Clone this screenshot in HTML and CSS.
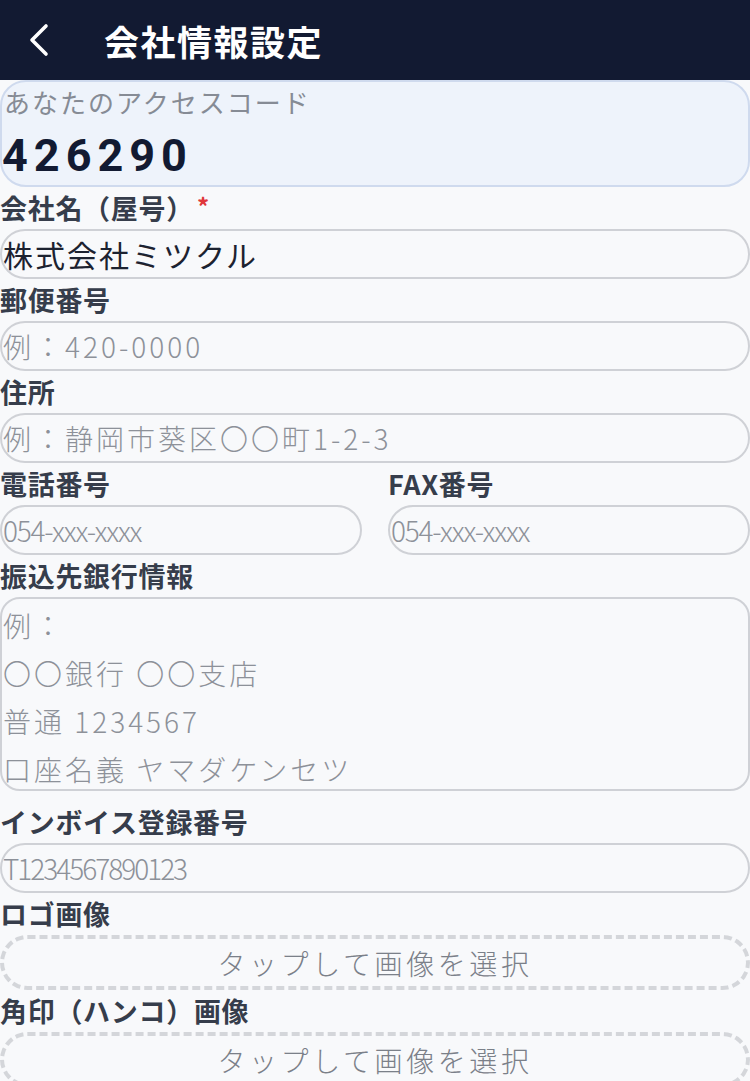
FILE: index.html
```html
<!DOCTYPE html>
<html lang="ja">
  <head>
    <meta charset="UTF-8" />
    <meta name="viewport" content="width=device-width, initial-scale=1.0" />
    <title>会社情報設定</title>
    <link rel="stylesheet" href="styles.css">
  </head>
  <body>
    <header class="appbar">
      <button class="back" aria-label="戻る">
        <svg width="24" height="34" viewBox="0 0 24 34">
          <polyline points="19,3 5,17 19,31" fill="none" stroke="#fff" stroke-width="3.6" stroke-linecap="round" stroke-linejoin="round" />
        </svg>
      </button>
      <h1 class="title">会社情報設定</h1>
    </header>

    <main class="form">
      <div class="code-card">
        <div class="code-label">あなたのアクセスコード</div>
        <div class="code-value">426290</div>
      </div>

      <label class="field-label" for="company">会社名（屋号）<span class="req">*</span></label>
      <input id="company" class="text-input filled" type="text" value="株式会社ミツクル" />

      <label class="field-label" for="zip">郵便番号</label>
      <input id="zip" class="text-input" type="text" placeholder="例：420-0000" />

      <label class="field-label" for="address">住所</label>
      <input id="address" class="text-input" type="text" placeholder="例：静岡市葵区〇〇町1-2-3" />

      <div class="row">
        <div class="col">
          <label class="field-label" for="tel">電話番号</label>
          <input id="tel" class="text-input narrow" type="tel" placeholder="054-xxx-xxxx" />
        </div>
        <div class="col">
          <label class="field-label" for="fax">FAX番号</label>
          <input id="fax" class="text-input narrow" type="tel" placeholder="054-xxx-xxxx" />
        </div>
      </div>

      <label class="field-label" for="bank">振込先銀行情報</label>
      <textarea id="bank" class="text-area" placeholder="例：&#10;〇〇銀行 〇〇支店&#10;普通 1234567&#10;口座名義 ヤマダケンセツ"></textarea>

      <label class="field-label" for="invoice">インボイス登録番号</label>
      <input id="invoice" class="text-input narrow tight" type="text" placeholder="T1234567890123" />

      <div class="field-label">ロゴ画像</div>
      <button class="picker">タップして画像を選択</button>

      <div class="field-label">角印（ハンコ）画像</div>
      <button class="picker">タップして画像を選択</button>
    </main>
  </body>
</html>
```

FILE: styles.css
```css
body {
  margin: 0;
  background: #f8f9fb;
  color: #1c2230;
  font-family: "Noto Sans CJK JP", "Noto Sans", sans-serif;
}

/* Header */
.appbar {
  display: flex;
  align-items: center;
  height: 80px;
  background: #121a32;
}
.back {
  background: none;
  border: 0;
  padding: 0;
  margin: 0 0 0 27px;
  width: 24px;
  height: 34px;
  cursor: pointer;
}
.back svg {
  display: block;
}
.title {
  margin: 0 0 0 53px;
  color: #fff;
  font-size: 35px;
  font-weight: 700;
  letter-spacing: 1.5px;
}

/* Access code */
.code-card {
  background: #eef3fb;
  border: 2px solid #cfdaee;
  border-radius: 26px;
  height: 103px;
}
.code-label {
  color: #868b95;
  font-size: 26px;
  line-height: 40px;
  letter-spacing: 2px;
  padding-left: 2px;
}
.code-value {
  margin-top: 5px;
  color: #121a32;
  font-family: Roboto, "Noto Sans", sans-serif;
  font-weight: 700;
  font-size: 45px;
  line-height: 58px;
  letter-spacing: 6px;
}

/* Fields */
.field-label {
  display: block;
  color: #363d4b;
  font-size: 27px;
  font-weight: 700;
  line-height: 42px;
  letter-spacing: 0.7px;
}
.req {
  color: #e0373a;
  margin-left: 3px;
  font-size: 24px;
  line-height: 1;
  vertical-align: 3px;
}
.text-input,
.text-area {
  display: block;
  box-sizing: border-box;
  width: 100%;
  margin: 0;
  background: transparent;
  border: 2px solid #cfd1d6;
  border-radius: 25px;
  font-family: "Noto Sans CJK JP", "Noto Sans", sans-serif;
  font-size: 28px;
  letter-spacing: 3px;
  color: #1c2230;
  outline: none;
}
.text-input {
  height: 50px;
  padding: 0 1px;
}
.text-input.filled {
  font-size: 30px;
  letter-spacing: 2px;
}
.text-input::placeholder,
.text-area::placeholder {
  color: #8d9199;
  font-weight: 300;
}
.text-input.narrow {
  font-family: "Liberation Sans Narrow", "Noto Sans CJK JP", sans-serif;
  font-size: 28px;
  letter-spacing: -1.2px;
}
.text-input.tight {
  letter-spacing: -2px;
}
.text-area {
  height: 194px;
  padding: 2px 1px;
  border-radius: 20px;
  line-height: 48px;
  resize: none;
  margin-bottom: 10px;
}

.row {
  display: flex;
  gap: 26px;
}
.col {
  flex: 1;
}

/* Image pickers */
.picker {
  display: block;
  box-sizing: border-box;
  width: 100%;
  height: 55px;
  margin: 0;
  padding: 0;
  background: transparent;
  border: 4px dashed #d4d6da;
  border-radius: 28px;
  color: #7b8089;
  font-family: "Noto Sans CJK JP", "Noto Sans", sans-serif;
  font-size: 28px;
  font-weight: 300;
  letter-spacing: 3.6px;
  cursor: pointer;
}
```
